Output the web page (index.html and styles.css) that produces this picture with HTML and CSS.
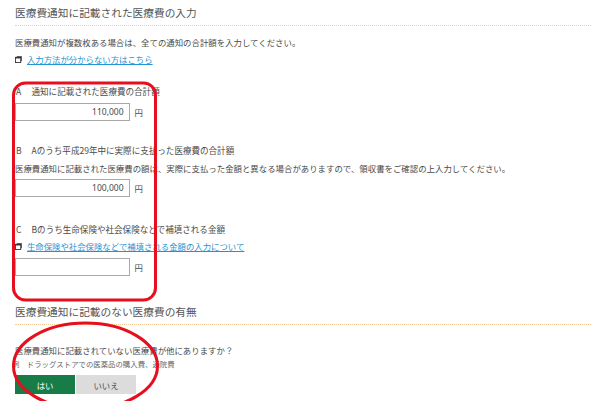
FILE: index.html
```html
<!DOCTYPE html>
<html lang="ja">
<head>
<meta charset="utf-8">
<title>医療費の入力</title>
<link rel="stylesheet" href="styles.css">
</head>
<body>
<main class="page">
  <h2 class="heading">医療費通知に記載された医療費の入力</h2>
  <p class="text intro">医療費通知が複数枚ある場合は、全ての通知の合計額を入力してください。</p>
  <p class="link-row link-first">
    <svg class="ico" viewBox="0 0 8 8"><path d="M2 .5h5.5V6" fill="none" stroke="#444" stroke-width="1"/><rect x=".5" y="1.5" width="6" height="6" fill="#fff" stroke="#333" stroke-width="1"/><rect x=".5" y="1.2" width="6" height="1.6" fill="#333"/></svg>
    <a class="link" href="#">入力方法が分からない方はこちら</a>
  </p>

  <section class="field field-a">
    <p class="text label"><span class="letter">A</span>通知に記載された医療費の合計額</p>
    <div class="amount"><div class="input">110,000</div><span class="text">円</span></div>
  </section>

  <section class="field field-b">
    <p class="text label"><span class="letter">B</span>Aのうち平成29年中に実際に支払った医療費の合計額</p>
    <p class="text note">医療費通知に記載された医療費の額は、実際に支払った金額と異なる場合がありますので、領収書をご確認の上入力してください。</p>
    <div class="amount"><div class="input">100,000</div><span class="text">円</span></div>
  </section>

  <section class="field field-c">
    <p class="text label"><span class="letter">C</span>Bのうち生命保険や社会保険などで補填される金額</p>
    <p class="link-row link-c">
      <svg class="ico" viewBox="0 0 8 8"><path d="M2 .5h5.5V6" fill="none" stroke="#444" stroke-width="1"/><rect x=".5" y="1.5" width="6" height="6" fill="#fff" stroke="#333" stroke-width="1"/><rect x=".5" y="1.2" width="6" height="1.6" fill="#333"/></svg>
      <a class="link" href="#">生命保険や社会保険などで補填される金額の入力について</a>
    </p>
    <div class="amount"><div class="input"></div><span class="text">円</span></div>
  </section>

  <h2 class="heading heading-second">医療費通知に記載のない医療費の有無</h2>
  <p class="text question">医療費通知に記載されていない医療費が他にありますか？</p>
  <p class="example">例　ドラッグストアでの医薬品の購入費、通院費</p>
  <div class="choices">
    <button class="choice choice-yes" type="button">はい</button>
    <button class="choice choice-no" type="button">いいえ</button>
  </div>
</main>
<svg class="marks" viewBox="0 0 600 401" aria-hidden="true">
  <rect x="13.5" y="83" width="142" height="217" rx="12" fill="none" stroke="#e60f1e" stroke-width="3"/>
  <ellipse cx="85.5" cy="366" rx="72" ry="43" fill="none" stroke="#e60f1e" stroke-width="3"/>
</svg>
</body>
</html>
```

FILE: styles.css
```css
html, body {
  margin: 0;
  padding: 0;
  background: #fff;
  height: 401px;
  overflow: hidden;
}

body {
  font-family: "Noto Sans CJK JP", "Noto Sans", sans-serif;
  color: #4a4a4a;
}

.page {
  padding: 5px 9px 0 15px;
}

p, h2 {
  margin: 0;
}

.heading {
  font-size: 10.7px;
  font-weight: 400;
  line-height: 16px;
  color: #555;
  padding-bottom: 4px;
  border-bottom: 1px dotted #f9cd94;
}

.heading-second {
  margin-top: 28px;
}

.text {
  font-size: 8.42px;
  line-height: 12px;
}

.intro {
  margin-top: 10px;
}

.link-row {
  display: flex;
  align-items: center;
  gap: 5px;
  font-size: 8.4px;
  line-height: 12px;
}

.link-first {
  margin-top: 5px;
}

.ico {
  width: 7px;
  height: 7px;
  flex: none;
}

.link {
  color: #1f93d3;
  text-decoration: underline;
}

.field-a {
  margin-top: 20px;
}

.field-b {
  margin-top: 23px;
}

.field-c {
  margin-top: 26px;
}

.label {
  padding-left: 1px;
  font-size: 8.55px;
}

.letter {
  display: inline-block;
  width: 15.5px;
}

.note {
  margin-top: 6px;
}

.link-c {
  margin-top: 5px;
}

.amount {
  display: flex;
  align-items: center;
  gap: 5px;
  margin-top: 6px;
}

.field-b .amount {
  margin-top: 5px;
}

.input {
  box-sizing: border-box;
  width: 114.5px;
  height: 18px;
  border: 1px solid #aaa;
  padding-right: 5px;
  text-align: right;
  font-size: 8.5px;
  line-height: 16px;
  font-family: "Noto Sans", sans-serif;
}

.question {
  margin-top: 19px;
}

.example {
  margin-top: 3px;
  margin-left: -3px;
  font-size: 7.4px;
  line-height: 10px;
  color: #666;
}

.choices {
  display: flex;
  gap: 1px;
  margin-top: 6px;
}

.choice {
  width: 60px;
  height: 19px;
  padding: 0;
  border: 1px solid #ddd;
  font: inherit;
  font-size: 8.4px;
}

.choice-yes {
  background: #177c48;
  border-color: #177c48;
  color: #fff;
}

.choice-no {
  background: #dcdcdc;
  color: #4a4a4a;
}

.marks {
  position: absolute;
  left: 0;
  top: 0;
  width: 600px;
  height: 401px;
  pointer-events: none;
}
```
